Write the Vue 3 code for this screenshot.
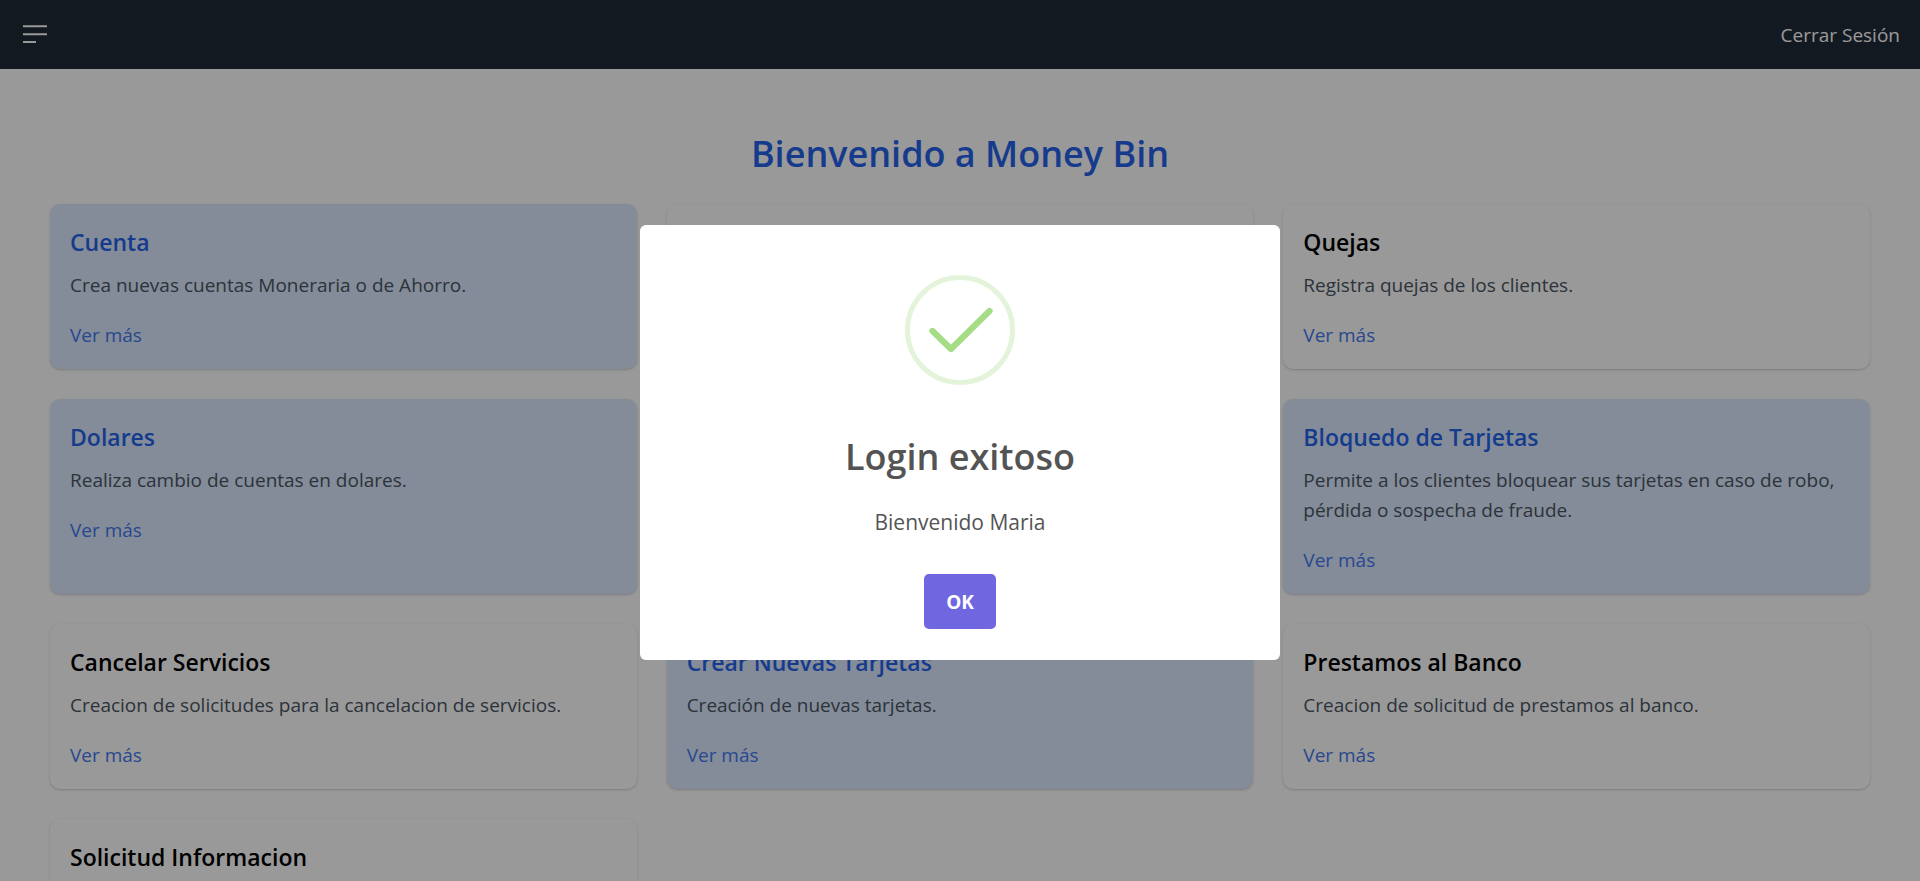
<script setup>
const cards = [
  { title: 'Cuenta', text: 'Crea nuevas cuentas Moneraria o de Ahorro.', blue: true },
  {},
  { title: 'Quejas', text: 'Registra quejas de los clientes.' },
  { title: 'Dolares', text: 'Realiza cambio de cuentas en dolares.', blue: true },
  {},
  { title: 'Bloquedo de Tarjetas', text: 'Permite a los clientes bloquear sus tarjetas en caso de robo, pérdida o sospecha de fraude.', blue: true },
  { title: 'Cancelar Servicios', text: 'Creacion de solicitudes para la cancelacion de servicios.' },
  { title: 'Crear Nuevas Tarjetas', text: 'Creación de nuevas tarjetas.', blue: true },
  { title: 'Prestamos al Banco', text: 'Creacion de solicitud de prestamos al banco.' },
  { title: 'Solicitud Informacion' },
]
</script>

<template>
  <div class="page">
    <header class="bar">
      <button class="menu" type="button" aria-label="Menú">
        <svg width="30" height="30" viewBox="0 0 30 30" fill="none" stroke="#fff" stroke-width="2">
          <path d="M3 6.2h24M3 14.2h24M3 22h13" />
        </svg>
      </button>
      <a class="logout" href="#">Cerrar Sesión</a>
    </header>
    <main class="content">
      <h1>Bienvenido a Money Bin</h1>
      <div class="grid">
        <article v-for="(card, i) in cards" :key="i" class="card" :class="{ blue: card.blue }">
          <h2 v-if="card.title">{{ card.title }}</h2>
          <template v-if="card.text">
            <p>{{ card.text }}</p>
            <a href="#">Ver más</a>
          </template>
        </article>
      </div>
    </main>
    <div class="overlay">
      <div class="modal" role="dialog" aria-modal="true" aria-labelledby="modal-title">
        <svg class="check" width="110" height="110" viewBox="0 0 110 110" fill="none">
          <circle cx="55" cy="55" r="52.5" stroke="#a5dc86" stroke-opacity=".3" stroke-width="5" />
          <path d="M27.5 56 46 74 84.5 36" stroke="#a5dc86" stroke-width="6.25" stroke-linecap="round" stroke-linejoin="round" />
        </svg>
        <h2 id="modal-title">Login exitoso</h2>
        <p>Bienvenido Maria</p>
        <button type="button">OK</button>
      </div>
    </div>
  </div>
</template>

<style>
body {
  overflow: hidden;
}
</style>

<style scoped>
.page {
  height: 100vh;
  overflow: hidden;
  background: #fff;
  color: #000;
  font-family: "Segoe UI", "Open Sans", "Noto Sans", sans-serif;
  font-size: 19px;
  line-height: 30px;
}
h1, h2, p {
  margin: 0;
}
a {
  text-decoration: none;
}
.bar {
  display: flex;
  align-items: center;
  justify-content: space-between;
  height: 69px;
  padding: 0 20px;
  background: #1f2a37;
}
.menu {
  display: flex;
  padding: 0;
  border: 0;
  background: none;
}
.logout {
  color: #fff;
}
.content {
  padding: 62px 50px;
}
h1 {
  margin-bottom: 28px;
  color: #2563eb;
  font-size: 36px;
  font-weight: 600;
  line-height: 45px;
  text-align: center;
}
.grid {
  display: grid;
  grid-template-columns: repeat(3, 1fr);
  gap: 30px;
}
.card {
  box-sizing: border-box;
  min-height: 165px;
  padding: 21px 20px 19px;
  border-radius: 10px;
  background: #fff;
  box-shadow: 0 1px 3px rgba(0, 0, 0, .1), 0 1px 2px rgba(0, 0, 0, .1);
}
.card h2 {
  margin-bottom: 10px;
  font-size: 23px;
  font-weight: 600;
  line-height: 35px;
}
.card p {
  margin-bottom: 20px;
  color: #4b5563;
}
.card a {
  display: inline-block;
  vertical-align: top;
  color: #4378f0;
}
.card.blue {
  background: #dbeafe;
}
.card.blue h2 {
  color: #2563eb;
}
.overlay {
  position: fixed;
  inset: 0;
  display: flex;
  align-items: center;
  justify-content: center;
  padding: 12px 12px 8px;
  background: rgba(0, 0, 0, .4);
}
.modal {
  display: flex;
  flex-direction: column;
  align-items: center;
  box-sizing: border-box;
  width: 640px;
  max-width: 100%;
  padding: 50px 32px 31px;
  border-radius: 6px;
  background: #fff;
  color: #545454;
}
.modal h2 {
  margin: 49px 0 26px;
  font-size: 36px;
  font-weight: 600;
  line-height: 45px;
}
.modal p {
  font-size: 21px;
  line-height: 34px;
}
.modal button {
  min-width: 72px;
  height: 55px;
  margin-top: 35px;
  border: 0;
  border-radius: 5px;
  background: #7066e0;
  color: #fff;
  font: 700 19px "Segoe UI", "Open Sans", "Noto Sans", sans-serif;
}
</style>
